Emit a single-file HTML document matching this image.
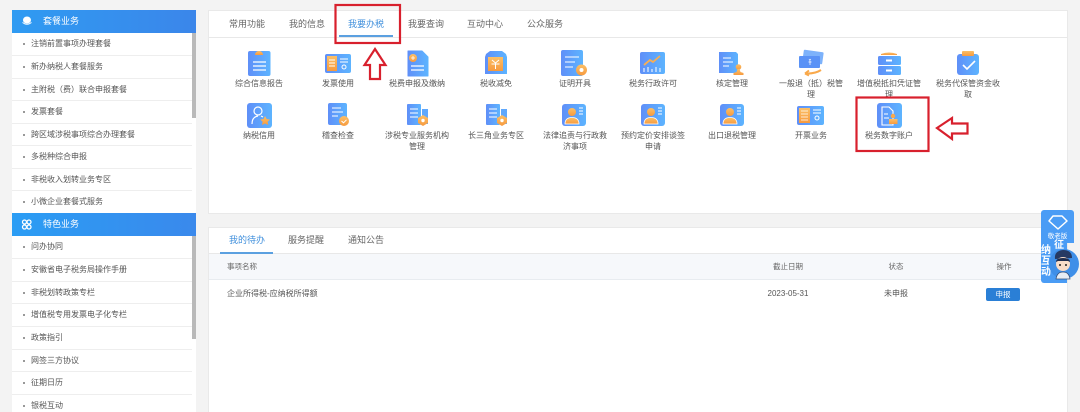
<!DOCTYPE html>
<html lang="zh"><head><meta charset="utf-8"><title>我要办税</title>
<style>
*{box-sizing:border-box}
html,body{margin:0;padding:0;width:1080px;height:412px;overflow:hidden;background:#f3f3f3}
body{font-family:"Liberation Sans","Noto Sans CJK SC",sans-serif;color:#555;font-size:8px;position:relative}
#root{position:absolute;left:0;top:0;width:1080px;height:412px;overflow:hidden;filter:blur(.3px)}
.a{position:absolute;white-space:nowrap}
.side{position:absolute;left:12px;width:184px;background:#fff}
.hd{position:absolute;left:12px;width:184px;height:23px;background:linear-gradient(90deg,#2f9bf2,#3b86ea);color:#fff;font-size:9px;line-height:23px;padding-left:31px}
.it{position:absolute;left:12px;width:180px;height:23px;line-height:22px;padding-left:19px;border-bottom:1px solid #eee;font-size:8px;color:#555;background:#fff}
.it:before{content:"";position:absolute;left:11px;top:10px;width:2px;height:2px;background:#999}
.bar{position:absolute;left:192px;width:4px;background:#b9b9b9}
.panel{position:absolute;left:208px;width:860px;background:#fff;border:1px solid #e9e9e9}
.tab{position:absolute;width:60px;text-align:center;font-size:9px;line-height:12px;color:#666}
.lb{position:absolute;width:76px;text-align:center;font-size:8px;line-height:11.4px;color:#555}
.th{position:absolute;width:70px;text-align:center;font-size:7.5px;color:#666;line-height:10px}
</style></head><body><div id="root">

<div class="side" style="top:10px;height:402px"></div>
<div class="hd" style="top:10px">套餐业务</div>
<div class="it" style="top:33px;height:23px">注销前置事项办理套餐</div>
<div class="it" style="top:56px;height:23px">新办纳税人套餐服务</div>
<div class="it" style="top:79px;height:22px">主附税（费）联合申报套餐</div>
<div class="it" style="top:101px;height:23px">发票套餐</div>
<div class="it" style="top:124px;height:22px">跨区域涉税事项综合办理套餐</div>
<div class="it" style="top:146px;height:23px">多税种综合申报</div>
<div class="it" style="top:169px;height:22px">非税收入划转业务专区</div>
<div class="it" style="top:191px;height:22px;border-bottom:0">小微企业套餐式服务</div>
<div class="hd" style="top:213px;background:linear-gradient(90deg,#2b9df4,#3a89ec)">特色业务</div>
<div class="it" style="top:236px;height:23px">问办协同</div>
<div class="it" style="top:259px;height:23px">安徽省电子税务局操作手册</div>
<div class="it" style="top:282px;height:22px">非税划转政策专栏</div>
<div class="it" style="top:304px;height:23px">增值税专用发票电子化专栏</div>
<div class="it" style="top:327px;height:23px">政策指引</div>
<div class="it" style="top:350px;height:22px">网签三方协议</div>
<div class="it" style="top:372px;height:23px">征期日历</div>
<div class="it" style="top:395px;height:17px;border-bottom:0">银税互动</div>
<div class="bar" style="top:33px;height:85px"></div>
<div class="bar" style="top:236px;height:103px"></div>

<div class="panel" style="top:10px;height:204px"></div>
<div class="a" style="left:209px;top:37px;width:858px;height:1px;background:#e8e8e8"></div>
<div class="tab" style="left:217px;top:18px">常用功能</div>
<div class="tab" style="left:277px;top:18px">我的信息</div>
<div class="tab" style="left:336px;top:18px;color:#3f8fdc">我要办税</div>
<div class="tab" style="left:396px;top:18px">我要查询</div>
<div class="tab" style="left:455px;top:18px">互动中心</div>
<div class="tab" style="left:515px;top:18px">公众服务</div>
<div class="a" style="left:339px;top:35px;width:54px;height:2px;background:#5ba0e0"></div>

<div class="lb" style="left:221px;top:78px">综合信息报告</div>
<div class="lb" style="left:300px;top:78px">发票使用</div>
<div class="lb" style="left:379px;top:78px">税费申报及缴纳</div>
<div class="lb" style="left:458px;top:78px">税收减免</div>
<div class="lb" style="left:537px;top:78px">证明开具</div>
<div class="lb" style="left:615px;top:78px">税务行政许可</div>
<div class="lb" style="left:694px;top:78px">核定管理</div>
<div class="lb" style="left:773px;top:78px">一般退（抵）税管<br>理</div>
<div class="lb" style="left:851px;top:78px">增值税抵扣凭证管<br>理</div>
<div class="lb" style="left:930px;top:78px">税务代保管资金收<br>取</div>
<div class="lb" style="left:221px;top:130px">纳税信用</div>
<div class="lb" style="left:300px;top:130px">稽查检查</div>
<div class="lb" style="left:379px;top:130px">涉税专业服务机构<br>管理</div>
<div class="lb" style="left:458px;top:130px">长三角业务专区</div>
<div class="lb" style="left:537px;top:130px">法律追责与行政救<br>济事项</div>
<div class="lb" style="left:615px;top:130px">预约定价安排谈签<br>申请</div>
<div class="lb" style="left:694px;top:130px">出口退税管理</div>
<div class="lb" style="left:773px;top:130px">开票业务</div>
<div class="lb" style="left:851px;top:130px">税务数字账户</div>

<div class="panel" style="top:227px;height:190px"></div>
<div class="a" style="left:209px;top:253px;width:858px;height:27px;background:#f6f8fb;border-bottom:1px solid #e8ecf0;border-top:1px solid #e8e8e8"></div>
<div class="tab" style="left:217px;top:234px;color:#3f8fdc">我的待办</div>
<div class="tab" style="left:276px;top:234px">服务提醒</div>
<div class="tab" style="left:336px;top:234px">通知公告</div>
<div class="a" style="left:220px;top:252px;width:53px;height:2px;background:#5ba0e0"></div>
<div class="a" style="left:227px;top:262px;font-size:7.5px;line-height:10px;color:#666">事项名称</div>
<div class="th" style="left:753px;top:262px">截止日期</div>
<div class="th" style="left:861px;top:262px">状态</div>
<div class="th" style="left:969px;top:262px">操作</div>
<div class="a" style="left:227px;top:289px;font-size:8px;line-height:10px;color:#555">企业所得税-应纳税所得额</div>
<div class="th" style="left:753px;top:289px;font-size:8px;color:#555">2023-05-31</div>
<div class="th" style="left:861px;top:289px;font-size:8px;color:#555">未申报</div>
<div class="a" style="left:986px;top:288px;width:34px;height:13px;background:#2a7fd6;border-radius:2px;color:#fff;text-align:center;line-height:13px;font-size:7.5px">申报</div>

<svg class="a" style="left:0;top:0" width="1080" height="412" viewBox="0 0 1080 412" xmlns="http://www.w3.org/2000/svg">
<defs>
<linearGradient id="g" x1="0" y1="0" x2="1" y2="0"><stop offset="0" stop-color="#5f8ff8"/><stop offset="1" stop-color="#5db4ff"/></linearGradient>
<linearGradient id="o" x1="0" y1="0" x2="0" y2="1"><stop offset="0" stop-color="#fbc067"/><stop offset="1" stop-color="#f79a3e"/></linearGradient>
</defs>
<ellipse cx="27" cy="20" rx="4" ry="3.5" fill="#fff"/><path d="M22.5 22.5q4.500 3.500 9 0" stroke="#fff" fill="none"/>
<g fill="none" stroke="#fff" stroke-width="1.300"><circle cx="24.500" cy="222" r="2"/><circle cx="29" cy="222" r="2"/><circle cx="24.500" cy="227" r="2"/><circle cx="29" cy="227" r="2"/></g>

<rect x="248" y="51" width="22.500" height="25" rx="2" fill="url(#g)"/><path d="M255 56a4 4 0 0 1 8 0l2 0v0h-12z" fill="url(#o)" transform="translate(0 -1)"/><path d="M253 62h13M253 66h13M253 70h13" stroke="#fff" stroke-width="1.200"/>
<rect x="325" y="54" width="26" height="19" rx="2" fill="url(#g)"/><rect x="327" y="56" width="10" height="15" fill="url(#o)"/><path d="M329 60h6M329 63h6M329 66h6" stroke="#fff" stroke-width=".9"/><path d="M340 59h8M340 62h8" stroke="#fff"/><circle cx="344" cy="67" r="2" fill="none" stroke="#fff"/>
<path d="M408 51h14l6 6v19h-20z" fill="url(#g)" stroke="url(#g)" stroke-linejoin="round"/><circle cx="413" cy="58" r="4" fill="url(#o)"/><path d="M411 58h4M413 56v4" stroke="#fff" stroke-width=".8"/><path d="M411 66h13M411 70h13" stroke="#fff" stroke-width="1.200"/>
<path d="M486 54l4-3h12l4 3 1 3v17h-22v-17z" fill="url(#g)"/><rect x="488" y="57" width="15" height="14" fill="url(#o)"/><path d="M492 60l3.500 3 3.500-3M491.500 64h8M495.500 63v6" stroke="#fff" fill="none"/>
<rect x="561" y="50" width="22" height="26" rx="2" fill="url(#g)"/><path d="M565 57h14M565 62h10M565 67h8" stroke="#fff" stroke-width="1.100"/><circle cx="581.500" cy="70" r="5.500" fill="url(#o)"/><circle cx="581.500" cy="70" r="2" fill="#fff"/>
<rect x="640" y="52" width="25" height="22" rx="2" fill="url(#g)"/><path d="M644 65l6-5 3 2 7-6" fill="none" stroke="#f9ae52" stroke-width="1.800"/><path d="M644 72v-4M648 72v-5M652 72v-3M656 72v-5M660 72v-4" stroke="#fff"/>
<path d="M719 52h17l2 2v19h-19z" fill="url(#g)"/><path d="M723 58h8M723 62h10M723 66h6" stroke="#fff" stroke-width="1.100"/><circle cx="738.500" cy="67" r="2.800" fill="url(#o)"/><path d="M737.500 69h2l1 3 3 1v2h-10v-2l3-1z" fill="url(#o)"/>
<rect x="803" y="51" width="20" height="12" rx="1" fill="#7db2fb" transform="rotate(8 813 57)"/><rect x="799" y="56" width="21" height="12" rx="1" fill="#5a92f6"/><path d="M809 59l.9 1.500.9-1.500M808.500 62h3M810 61v4" stroke="#fff" stroke-width=".7" fill="none"/><path d="M821 70q-6 4-16 3.500M805 73.500l4-3M805 73.500l4 2" stroke="#f9a94b" stroke-width="2" fill="none"/>
<path d="M881 54q8-3 16 0v1h-16z" fill="url(#o)"/><rect x="878" y="56" width="23" height="9" rx="1.500" fill="url(#g)"/><rect x="878" y="66" width="23" height="9" rx="1.500" fill="url(#g)"/><rect x="886" y="59.500" width="6" height="2" fill="#fff"/><rect x="886" y="69.500" width="6" height="2" fill="#fff"/>
<rect x="957" y="54" width="22" height="21" rx="3" fill="url(#g)"/><rect x="962" y="51" width="12" height="5" rx="1" fill="url(#o)"/><path d="M963 65l4 4 8-8" stroke="#fff" stroke-width="1.600" fill="none"/>

<rect x="247" y="103" width="25" height="25" rx="3" fill="url(#g)"/><circle cx="258" cy="111" r="4" fill="none" stroke="#fff" stroke-width="1.200"/><path d="M252 124q0-7 6-8M261 116l2 1" fill="none" stroke="#fff" stroke-width="1.200"/><path d="M265 116l1.700 3 3.300.5-2.400 2.300.6 3.200-3.200-1.500-3 1.500.6-3.200-2.400-2.300 3.300-.5z" fill="url(#o)"/>
<rect x="328" y="103" width="19" height="22" rx="2" fill="url(#g)"/><path d="M332 108h9M332 112h11M332 116h6" stroke="#fff" stroke-width="1.100"/><circle cx="344" cy="121" r="5" fill="url(#o)"/><path d="M341.500 121l2 1.800 3-3" stroke="#fff" fill="none"/>
<rect x="407" y="104" width="14" height="21" rx="1" fill="url(#g)"/><rect x="422" y="109" width="6" height="15" fill="#5ea8fd"/><path d="M410 109h8M410 113h8M410 117h8" stroke="#fff"/><path d="M423 115l5 3v5l-5 3-5-3v-5z" fill="url(#o)"/><circle cx="423" cy="120.500" r="1.700" fill="#fff"/>
<rect x="486" y="104" width="14" height="21" rx="1" fill="url(#g)"/><rect x="501" y="109" width="6" height="15" fill="#5ea8fd"/><path d="M489 109h8M489 113h8M489 117h8" stroke="#fff"/><path d="M502 115l5 3v5l-5 3-5-3v-5z" fill="url(#o)"/><circle cx="502" cy="120.500" r="1.700" fill="#fff"/>
<g><rect x="562" y="104" width="24" height="22" rx="3" fill="url(#g)"/><circle cx="572" cy="112" r="4" fill="url(#o)"/><path d="M565 124q0-6.500 7-6.500t7 6.500z" fill="url(#o)" stroke="#fff" stroke-width=".8"/><path d="M579 108h4M579 111h4M579 114h4" stroke="#fff" stroke-width=".9"/></g>
<g transform="translate(79 0)"><rect x="562" y="104" width="24" height="22" rx="3" fill="url(#g)"/><circle cx="572" cy="112" r="4" fill="url(#o)"/><path d="M565 124q0-6.500 7-6.500t7 6.500z" fill="url(#o)" stroke="#fff" stroke-width=".8"/><path d="M579 108h4M579 111h4M579 114h4" stroke="#fff" stroke-width=".9"/></g>
<g transform="translate(158 0)"><rect x="562" y="104" width="24" height="22" rx="3" fill="url(#g)"/><circle cx="572" cy="112" r="4" fill="url(#o)"/><path d="M565 124q0-6.500 7-6.500t7 6.500z" fill="url(#o)" stroke="#fff" stroke-width=".8"/><path d="M579 108h4M579 111h4M579 114h4" stroke="#fff" stroke-width=".9"/></g>
<rect x="797" y="106" width="27" height="19" rx="2" fill="url(#g)"/><rect x="799" y="108" width="11" height="15" fill="url(#o)"/><path d="M801 111h7M801 114h7M801 117h7M801 120h7" stroke="#fff" stroke-width=".7"/><path d="M813 110h8M813 113h8" stroke="#fff"/><circle cx="817" cy="118" r="2" fill="none" stroke="#fff"/>
<rect x="877" y="103" width="25" height="25" rx="3" fill="url(#g)"/><path d="M882 107h7l4 4v14h-11z" fill="none" stroke="#fff" stroke-width="1.100"/><path d="M884 114h4M884 118h5" stroke="#fff"/><circle cx="893" cy="116" r="2.200" fill="#f9a94b"/><rect x="889" y="119" width="8.500" height="5" fill="url(#o)"/>

<rect x="335.500" y="5" width="64.500" height="38" fill="none" stroke="#d8202d" stroke-width="2.200"/>
<path d="M375 49l10.500 16h-5.500v14h-10v-14h-5.500z" fill="#fff" stroke="#d8202d" stroke-width="2.200"/>
<rect x="856.500" y="97.500" width="72" height="53.500" fill="none" stroke="#d8202d" stroke-width="2.200"/>
<path d="M937 128l15-10v5.500h15.500v10h-15.500v5.500z" fill="#fff" stroke="#d8202d" stroke-width="2.200"/>

<path d="M1044 210h27a3 3 0 0 1 3 3v30h-33v-30a3 3 0 0 1 3-3z" fill="#4a9cf5"/>
<path d="M1041 243h26v40h-23a3 3 0 0 1-3-3z" fill="#4a9cf5"/>
<path d="M1057 216h5l5 5-9 8-9-8 4-5z" fill="none" stroke="#fff" stroke-width="1.500" stroke-linejoin="round"/>
<text x="1057.500" y="238" font-size="6.500" fill="#fff" text-anchor="middle" font-family="Liberation Sans,Noto Sans CJK SC,sans-serif">敬老版</text>
<text x="1059" y="248" font-size="10" fill="#fff" text-anchor="middle" font-weight="700" font-family="Liberation Sans,Noto Sans CJK SC,sans-serif">征</text>
<text x="1046" y="253" font-size="10" fill="#fff" text-anchor="middle" font-weight="700" font-family="Liberation Sans,Noto Sans CJK SC,sans-serif">纳</text>
<text x="1046" y="264" font-size="10" fill="#fff" text-anchor="middle" font-weight="700" font-family="Liberation Sans,Noto Sans CJK SC,sans-serif">互</text>
<text x="1046" y="275" font-size="10" fill="#fff" text-anchor="middle" font-weight="700" font-family="Liberation Sans,Noto Sans CJK SC,sans-serif">动</text>
<circle cx="1064" cy="264" r="15" fill="#3f8fe8"/>
<path d="M1055 259q-1-8 8-9 9 0 9 8z" fill="#263a63"/>
<circle cx="1063" cy="264" r="7" fill="#f8dcc8"/>
<path d="M1056 262q0-4 7-4 7 0 7 4l-2-1h-10z" fill="#1e2c4d"/>
<circle cx="1060" cy="265" r="1" fill="#222"/><circle cx="1066" cy="265" r="1" fill="#222"/>
<path d="M1056 279q1-7 7-7 6 0 7 7z" fill="#e7edf5" stroke="#37507a" stroke-width=".8"/>
</svg>
</div></body></html>
